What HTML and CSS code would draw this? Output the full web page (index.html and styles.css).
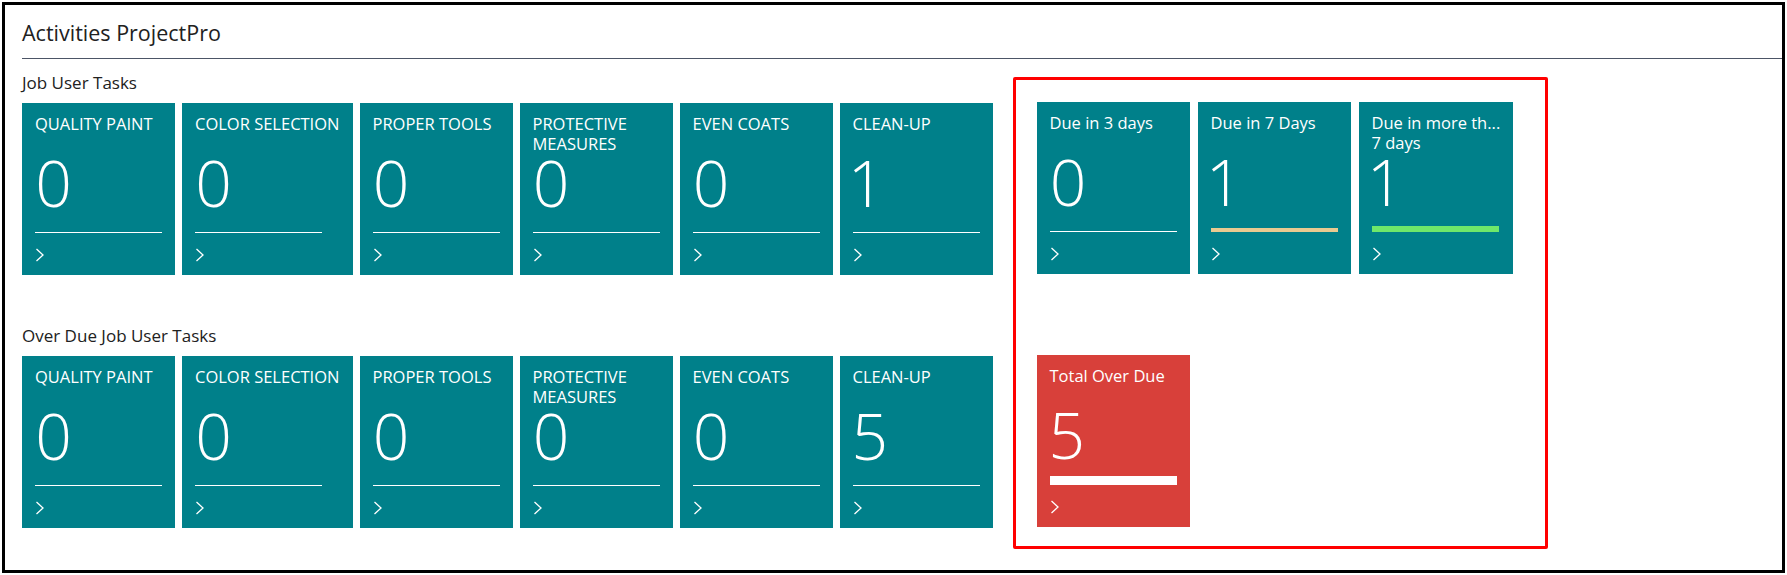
FILE: index.html
```html
<!DOCTYPE html>
<html lang="en">
<head>
    <meta charset="UTF-8">
    <meta name="viewport" content="width=device-width, initial-scale=1.0">
    <title>Activities ProjectPro</title>
    <link rel="stylesheet" href="styles.css">
</head>
<body>
    <div class="frame">
        <header class="part-header">
            <h1 class="part-title">Activities ProjectPro</h1>
        </header>

        <div class="part-body">
            <div class="cue-groups">
                <section class="cue-group">
                    <h2 class="cue-caption">Job User Tasks</h2>
                    <div class="cue-row">
                        <a class="cue" href="#">
                            <span class="cue-title">QUALITY PAINT</span>
                            <span class="cue-value">0</span>
                            <span class="cue-track"><span class="cue-bar"></span></span>
                            <svg class="cue-chevron" viewBox="0 0 11 14"><path d="M1.5 1 L8 7 L1.5 13"/></svg>
                        </a>
                        <a class="cue" href="#">
                            <span class="cue-title">COLOR SELECTION</span>
                            <span class="cue-value">0</span>
                            <span class="cue-track"><span class="cue-bar"></span></span>
                            <svg class="cue-chevron" viewBox="0 0 11 14"><path d="M1.5 1 L8 7 L1.5 13"/></svg>
                        </a>
                        <a class="cue" href="#">
                            <span class="cue-title">PROPER TOOLS</span>
                            <span class="cue-value">0</span>
                            <span class="cue-track"><span class="cue-bar"></span></span>
                            <svg class="cue-chevron" viewBox="0 0 11 14"><path d="M1.5 1 L8 7 L1.5 13"/></svg>
                        </a>
                        <a class="cue" href="#">
                            <span class="cue-title">PROTECTIVE<br>MEASURES</span>
                            <span class="cue-value">0</span>
                            <span class="cue-track"><span class="cue-bar"></span></span>
                            <svg class="cue-chevron" viewBox="0 0 11 14"><path d="M1.5 1 L8 7 L1.5 13"/></svg>
                        </a>
                        <a class="cue" href="#">
                            <span class="cue-title">EVEN COATS</span>
                            <span class="cue-value">0</span>
                            <span class="cue-track"><span class="cue-bar"></span></span>
                            <svg class="cue-chevron" viewBox="0 0 11 14"><path d="M1.5 1 L8 7 L1.5 13"/></svg>
                        </a>
                        <a class="cue" href="#">
                            <span class="cue-title">CLEAN-UP</span>
                            <span class="cue-value">1</span>
                            <span class="cue-track"><span class="cue-bar"></span></span>
                            <svg class="cue-chevron" viewBox="0 0 11 14"><path d="M1.5 1 L8 7 L1.5 13"/></svg>
                        </a>
                    </div>
                </section>

                <section class="cue-group">
                    <h2 class="cue-caption">Over Due Job User Tasks</h2>
                    <div class="cue-row">
                        <a class="cue" href="#">
                            <span class="cue-title">QUALITY PAINT</span>
                            <span class="cue-value">0</span>
                            <span class="cue-track"><span class="cue-bar"></span></span>
                            <svg class="cue-chevron" viewBox="0 0 11 14"><path d="M1.5 1 L8 7 L1.5 13"/></svg>
                        </a>
                        <a class="cue" href="#">
                            <span class="cue-title">COLOR SELECTION</span>
                            <span class="cue-value">0</span>
                            <span class="cue-track"><span class="cue-bar"></span></span>
                            <svg class="cue-chevron" viewBox="0 0 11 14"><path d="M1.5 1 L8 7 L1.5 13"/></svg>
                        </a>
                        <a class="cue" href="#">
                            <span class="cue-title">PROPER TOOLS</span>
                            <span class="cue-value">0</span>
                            <span class="cue-track"><span class="cue-bar"></span></span>
                            <svg class="cue-chevron" viewBox="0 0 11 14"><path d="M1.5 1 L8 7 L1.5 13"/></svg>
                        </a>
                        <a class="cue" href="#">
                            <span class="cue-title">PROTECTIVE<br>MEASURES</span>
                            <span class="cue-value">0</span>
                            <span class="cue-track"><span class="cue-bar"></span></span>
                            <svg class="cue-chevron" viewBox="0 0 11 14"><path d="M1.5 1 L8 7 L1.5 13"/></svg>
                        </a>
                        <a class="cue" href="#">
                            <span class="cue-title">EVEN COATS</span>
                            <span class="cue-value">0</span>
                            <span class="cue-track"><span class="cue-bar"></span></span>
                            <svg class="cue-chevron" viewBox="0 0 11 14"><path d="M1.5 1 L8 7 L1.5 13"/></svg>
                        </a>
                        <a class="cue" href="#">
                            <span class="cue-title">CLEAN-UP</span>
                            <span class="cue-value">5</span>
                            <span class="cue-track"><span class="cue-bar"></span></span>
                            <svg class="cue-chevron" viewBox="0 0 11 14"><path d="M1.5 1 L8 7 L1.5 13"/></svg>
                        </a>
                    </div>
                </section>
            </div>

            <div class="cue-focus">
                <div class="cue-row">
                    <a class="cue" href="#">
                        <span class="cue-title">Due in 3 days</span>
                        <span class="cue-value">0</span>
                        <span class="cue-track"><span class="cue-bar"></span></span>
                        <svg class="cue-chevron" viewBox="0 0 11 14"><path d="M1.5 1 L8 7 L1.5 13"/></svg>
                    </a>
                    <a class="cue" href="#">
                        <span class="cue-title">Due in 7 Days</span>
                        <span class="cue-value">1</span>
                        <span class="cue-track"><span class="cue-bar bar-warn"></span></span>
                        <svg class="cue-chevron" viewBox="0 0 11 14"><path d="M1.5 1 L8 7 L1.5 13"/></svg>
                    </a>
                    <a class="cue" href="#">
                        <span class="cue-title">Due in more th...<br>7 days</span>
                        <span class="cue-value">1</span>
                        <span class="cue-track"><span class="cue-bar bar-ok"></span></span>
                        <svg class="cue-chevron" viewBox="0 0 11 14"><path d="M1.5 1 L8 7 L1.5 13"/></svg>
                    </a>
                </div>
                <div class="cue-row">
                    <a class="cue cue-alert" href="#">
                        <span class="cue-title">Total Over Due</span>
                        <span class="cue-value">5</span>
                        <span class="cue-track"><span class="cue-bar bar-full"></span></span>
                        <svg class="cue-chevron" viewBox="0 0 11 14"><path d="M1.5 1 L8 7 L1.5 13"/></svg>
                    </a>
                </div>
            </div>
        </div>
    </div>
</body>
</html>
```

FILE: styles.css
```css
body {
    margin: 0;
    font-family: "Open Sans", "Noto Sans", sans-serif;
    color: #212121;
    background: #fff;
}

.frame {
    height: calc(100vh - 4px);
    margin: 2px;
    box-sizing: border-box;
    border: 3px solid #000;
}

.part-header {
    margin-left: 17px;
    padding: 14px 0 11px;
    border-bottom: 1px solid #4c5566;
}

.part-title {
    margin: 0;
    font-size: 21.5px;
    font-weight: 400;
    line-height: 28px;
}

.part-body {
    display: flex;
    align-items: flex-start;
    padding: 13px 0 0 17px;
}

.cue-caption {
    margin: 0 0 9px;
    font-size: 17px;
    font-weight: 400;
    line-height: 22px;
}

.cue-group + .cue-group {
    margin-top: 50px;
}

.cue-row {
    display: flex;
    gap: 7px;
}

/* tile */
.cue {
    display: flex;
    flex-direction: column;
    min-width: 153px;
    height: 172px;
    padding: 11px 13px 0;
    box-sizing: border-box;
    background: #00808a;
    color: #fff;
    text-decoration: none;
}

.cue-alert {
    background: #d8403a;
}

.cue-title {
    height: 37px;
    font-size: 16.5px;
    line-height: 20px;
    white-space: nowrap;
}

.cue-value {
    font-size: 64px;
    font-weight: 300;
    line-height: 64px;
    font-variant-numeric: proportional-nums;
}

.cue-track {
    display: flex;
    align-items: flex-end;
    width: 127px;
    height: 9px;
    margin-top: 9px;
}

.cue-bar {
    width: 100%;
    height: 1px;
    background: #fff;
}

.bar-warn {
    height: 4px;
    background: #e9ca90;
}

.bar-ok {
    height: 6px;
    background: #6ee86a;
}

.bar-full {
    height: 9px;
}

.cue-chevron {
    width: 11px;
    height: 14px;
    margin-top: 15px;
    fill: none;
    stroke: #fff;
    stroke-width: 1.3;
}

/* highlighted area */
.cue-focus {
    display: flex;
    flex-direction: column;
    gap: 81px;
    margin: 5px 0 0 20px;
    padding: 22px 32px 19px 21px;
    border: 3px solid #f00;
    border-radius: 2px;
}

.cue-focus .cue-row {
    gap: 8px;
}

.cue-focus .cue {
    min-width: 152px;
}
```
